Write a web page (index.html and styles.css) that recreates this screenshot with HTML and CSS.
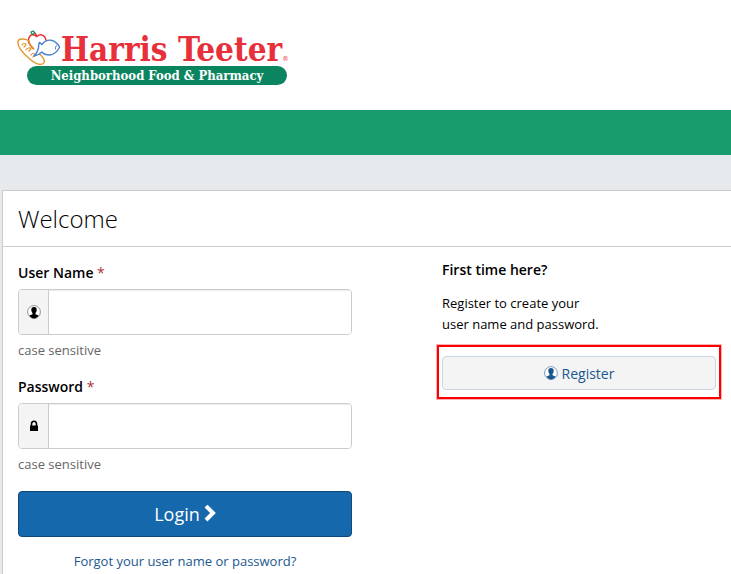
FILE: index.html
```html
<!DOCTYPE html>
<html lang="en">
<head>
  <meta charset="UTF-8">
  <meta name="viewport" content="width=device-width, initial-scale=1.0">
  <title>Harris Teeter - Login</title>
  <link rel="stylesheet" href="styles.css">
</head>
<body>
  <header class="header">
    <a class="logo" href="#">
      <svg class="logo-art" width="44" height="36" viewBox="0 0 44 36" fill="none" stroke-linecap="round" stroke-linejoin="round" aria-hidden="true">
        <!-- apple -->
        <path d="M16 18.500c-4-4-6-9-3-12.500 2-2 5-1 7 .5 3-3 8-2 9 4" stroke="#ee2e34" stroke-width="1.500"/>
        <path d="M19.500 6.500c0-2-1-2.500-1.500-3.500" stroke="#ee2e34" stroke-width="1.400"/>
        <path d="M14 2l2-1 1.500 1.500-1 2-2-1z" stroke="#0b8a5b" stroke-width="1.200"/>
        <!-- bread -->
        <path d="M11.500 10.500C8 8.500 1 8 .8 12c0 6 6 12 12 17 4 4 10 7 13.500 4.500 3-2.500-1-7-3.300-9M12 11c0 3 3 6 5 8" stroke="#e0982e" stroke-width="1.400"/>
        <path d="M5 15c1-2 4-2 4 0l-2 2M9 20c1-2 4-3 5-1l-2 2M14 25c1-2 4-2 4 0l-2 2" stroke="#e0982e" stroke-width="1.200"/>
        <!-- fish -->
        <path d="M25 14.500c2-3 6-4.500 9-4.300 4 .5 7 4 8.600 6.800-2 4-5 7.500-9.600 8-4 0-7-1.500-8-3-2 2-5 3.500-8 4 3-3 4-6 4.500-8 0-2 .2-4 .8-5.500 1 .5 1.700 1 2.700 2z" fill="#fff" stroke="#4b82d2" stroke-width="1.400"/>
        <path d="M40 15c-1 1-2 2-1.500 4" stroke="#4b82d2"/>
      </svg>
      <span class="logo-name">Harris Teeter<small>®</small></span>
      <span class="logo-tag">Neighborhood Food &amp; Pharmacy</span>
    </a>
  </header>
  <div class="bar"></div>

  <main class="panel">
    <h1>Welcome</h1>
    <div class="columns">
      <form class="login" action="#">
        <div class="field">
          <label for="username">User Name <span class="required">*</span></label>
          <div class="input-group">
            <span class="addon">
              <svg width="14" height="14" viewBox="0 0 14 14" aria-hidden="true">
                <circle cx="7" cy="7" r="6.4" fill="#fff" stroke="#777" stroke-width=".8"/>
                <path d="M7 2C5 2 4.2 3.2 4.3 5c.1 1.500.6 2.400 1.200 3v1.200L2.400 10.500C3.500 12.300 5 13.400 7 13.400s3.500-1.100 4.600-2.900L8.500 9.200V8c.6-.6 1.100-1.500 1.200-3C9.800 3.200 9 2 7 2z" fill="currentColor"/>
              </svg>
            </span>
            <input type="text" id="username" name="username">
          </div>
          <p class="help">case sensitive</p>
        </div>

        <div class="field">
          <label for="password">Password <span class="required">*</span></label>
          <div class="input-group">
            <span class="addon">
              <svg width="10" height="12" viewBox="0 0 10 12" aria-hidden="true">
                <path d="M2.500 6V4a2.500 2.700 0 0 1 5 0v2" fill="none" stroke="currentColor" stroke-width="1.600"/>
                <rect x="1" y="5.500" width="8" height="5.500" rx=".5" fill="currentColor"/>
              </svg>
            </span>
            <input type="password" id="password" name="password">
          </div>
          <p class="help">case sensitive</p>
        </div>

        <button type="submit" class="btn-login">Login
          <svg width="12" height="18" viewBox="0 0 12 18" aria-hidden="true">
            <path d="M2 1l7 7-7 7" fill="none" stroke="currentColor" stroke-width="4"/>
          </svg>
        </button>
        <a class="forgot" href="#">Forgot your user name or password?</a>
      </form>

      <section class="register">
        <h2>First time here?</h2>
        <p>Register to create your<br>user name and password.</p>
        <div class="highlight">
          <button type="button" class="btn-register">
            <svg width="14" height="14" viewBox="0 0 14 14" aria-hidden="true">
              <circle cx="7" cy="7" r="6.400" fill="#fff" stroke="#5b82a8" stroke-width=".8"/>
              <path d="M7 2C5 2 4.200 3.200 4.300 5c.1 1.500.6 2.400 1.200 3v1.200L2.400 10.500C3.500 12.300 5 13.400 7 13.400s3.500-1.100 4.600-2.900L8.500 9.200V8c.6-.6 1.100-1.500 1.200-3C9.800 3.200 9 2 7 2z" fill="currentColor"/>
            </svg>
            Register
          </button>
        </div>
      </section>
    </div>
  </main>
</body>
</html>
```
FILE: styles.css
```css
* {
  box-sizing: border-box;
}

body {
  margin: 0;
  min-height: 100vh;
  display: flex;
  flex-direction: column;
  background-color: #e6eaed;
  color: #000;
  font-family: "Open Sans", sans-serif;
  font-size: 13px;
  line-height: 20px;
}

h1, h2, p {
  margin: 0;
}

.header {
  background-color: #fff;
  padding: 30px 17px 25px;
}

/* logo */
.logo {
  display: inline-grid;
  grid-template-columns: 10px 34px 226px;
  grid-template-rows: 36px 19px;
  text-decoration: none;
}

.logo-art {
  grid-column: 1 / 3;
  grid-row: 1;
}

.logo-name {
  grid-column: 3;
  grid-row: 1;
  color: #e8303a;
  font-family: "DejaVu Serif Condensed", "DejaVu Serif", serif;
  font-weight: bold;
  font-size: 33px;
  line-height: 40px;
  white-space: nowrap;
}

.logo-name small {
  font-size: 7px;
  font-weight: normal;
}

.logo-tag {
  grid-column: 2 / 4;
  grid-row: 2;
  border-radius: 10px;
  background-color: #0a8560;
  color: #fff;
  font-family: "DejaVu Serif Condensed", "DejaVu Serif", serif;
  font-weight: bold;
  font-size: 13px;
  line-height: 19px;
  text-align: center;
  white-space: nowrap;
}

.bar {
  height: 45px;
  background-color: #189c6e;
}

/* panel */
.panel {
  flex: 1;
  margin: 35px 0 0 2px;
  border: 1px solid #ccc;
  border-width: 1px 0 0 1px;
  background-color: #fff;
}

h1 {
  padding: 0 15px;
  border-bottom: 1px solid #ccc;
  font-size: 24px;
  font-weight: 300;
  line-height: 55px;
}

.columns {
  display: grid;
  grid-template-columns: 334fr 274fr;
  column-gap: 90px;
  padding: 16px 15px 0;
}

.field {
  margin-bottom: 17px;
}

label {
  display: block;
  margin-bottom: 6px;
  font-size: 14px;
  font-weight: 600;
}

.required {
  color: #a33;
  font-weight: 400;
}

.input-group {
  display: flex;
  height: 46px;
  border: 1px solid #ccc;
  border-radius: 4px;
  overflow: hidden;
}

.addon {
  width: 30px;
  display: flex;
  align-items: center;
  justify-content: center;
  border-right: 1px solid #ccc;
  background-color: #f4f4f4;
}

.input-group input {
  flex: 1;
  min-width: 0;
  border: 0;
  padding: 0 12px;
  font: inherit;
  box-shadow: inset 0 1px 1px rgba(0, 0, 0, 0.08);
}

.help {
  margin-top: 5px;
  color: #666;
}

button {
  display: flex;
  align-items: center;
  justify-content: center;
  width: 100%;
  border-radius: 4px;
  font-family: inherit;
  cursor: pointer;
}

.btn-login {
  height: 46px;
  gap: 4px;
  border: 1px solid #0f4a7c;
  background-color: #1568ac;
  color: #fff;
  font-size: 18px;
}

.forgot {
  display: block;
  margin-top: 14px;
  color: #1a5790;
  text-align: center;
  text-decoration: none;
}

/* register */
h2 {
  margin: -3px 0 13px;
  font-size: 14px;
  font-weight: 600;
  line-height: 20px;
}

.register p {
  line-height: 21px;
}

.highlight {
  margin: 10px -5px 0;
  padding: 9px 3px 7px;
  border: 2px solid #f00;
  box-shadow: 0 0 0 1px rgba(255, 0, 0, 0.3);
}

.btn-register {
  height: 34px;
  gap: 4px;
  border: 1px solid #ccd6e2;
  background-color: #f4f4f4;
  color: #1a5790;
  font-size: 14px;
}
```
